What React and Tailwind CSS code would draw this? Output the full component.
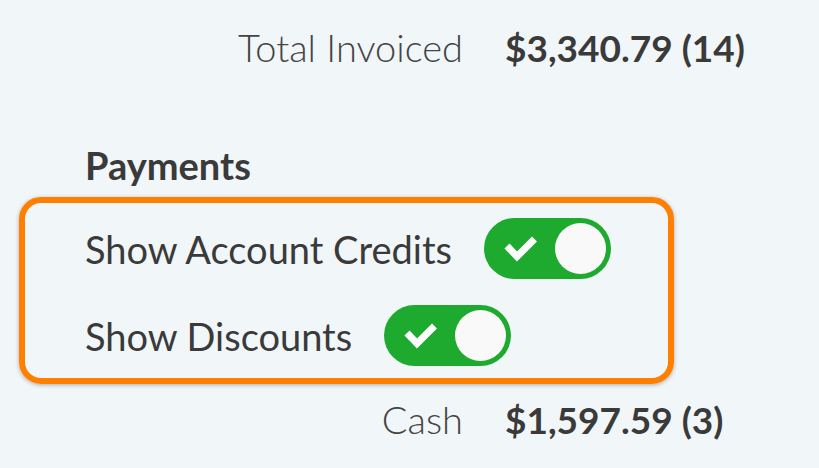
import React, { useState } from "react";

const font = { fontFamily: "Lato, 'Open Sans', sans-serif" };

function Toggle({ checked, onChange }) {
  return (
    <button
      onClick={() => onChange(!checked)}
      className={
        "relative flex h-[61px] w-[127px] shrink-0 items-center rounded-full p-[5px] " +
        (checked ? "bg-[#1eaa2e] justify-end" : "bg-[#c9ced3] justify-start")
      }
    >
      {checked && (
        <svg
          className="absolute left-0 top-0 h-[61px] w-[64px]"
          viewBox="0 0 64 61"
          fill="none"
        >
          <path d="M23 28 L33 38.5 L50.5 21" stroke="#fff" strokeWidth="7" strokeLinejoin="miter" />
        </svg>
      )}
      <span className="block h-[51px] w-[51px] rounded-full bg-[#f9f9f9]" />
    </button>
  );
}

function SummaryRow({ label, value }) {
  return (
    <div className="flex items-center">
      <div className="w-[463px] text-right text-[38px] font-light text-[#444]">{label}</div>
      <div className="ml-[42px] text-[37px] font-bold text-[#3a3a3a]">{value}</div>
    </div>
  );
}

export default function App() {
  const [credits, setCredits] = useState(true);
  const [discounts, setDiscounts] = useState(true);

  return (
    <div style={font} className="h-[468px] w-[819px] overflow-hidden bg-[#f1f6f9] leading-none text-[#3a3a3a]">
      <div className="pt-[28px]">
        <SummaryRow label="Total Invoiced" value="$3,340.79 (14)" />
      </div>
      <div className="mt-[80px] pl-[85px] text-[38px] font-bold">Payments</div>
      <div className="ml-[19px] mt-[13px] w-[655px] rounded-[22px] border-[6px] border-[#ff8000] pl-[60px] pt-[15px] pb-[12px] shadow-[0_1px_4px_rgba(0,0,0,0.3)]">
        <div className="flex items-center gap-[32px]">
          <span className="text-[38px]">Show Account Credits</span>
          <Toggle checked={credits} onChange={setCredits} />
        </div>
        <div className="mt-[26px] flex items-center gap-[32px]">
          <span className="text-[38px]">Show Discounts</span>
          <Toggle checked={discounts} onChange={setDiscounts} />
        </div>
      </div>
      <div className="mt-[16px]">
        <SummaryRow label="Cash" value="$1,597.59 (3)" />
      </div>
    </div>
  );
}
